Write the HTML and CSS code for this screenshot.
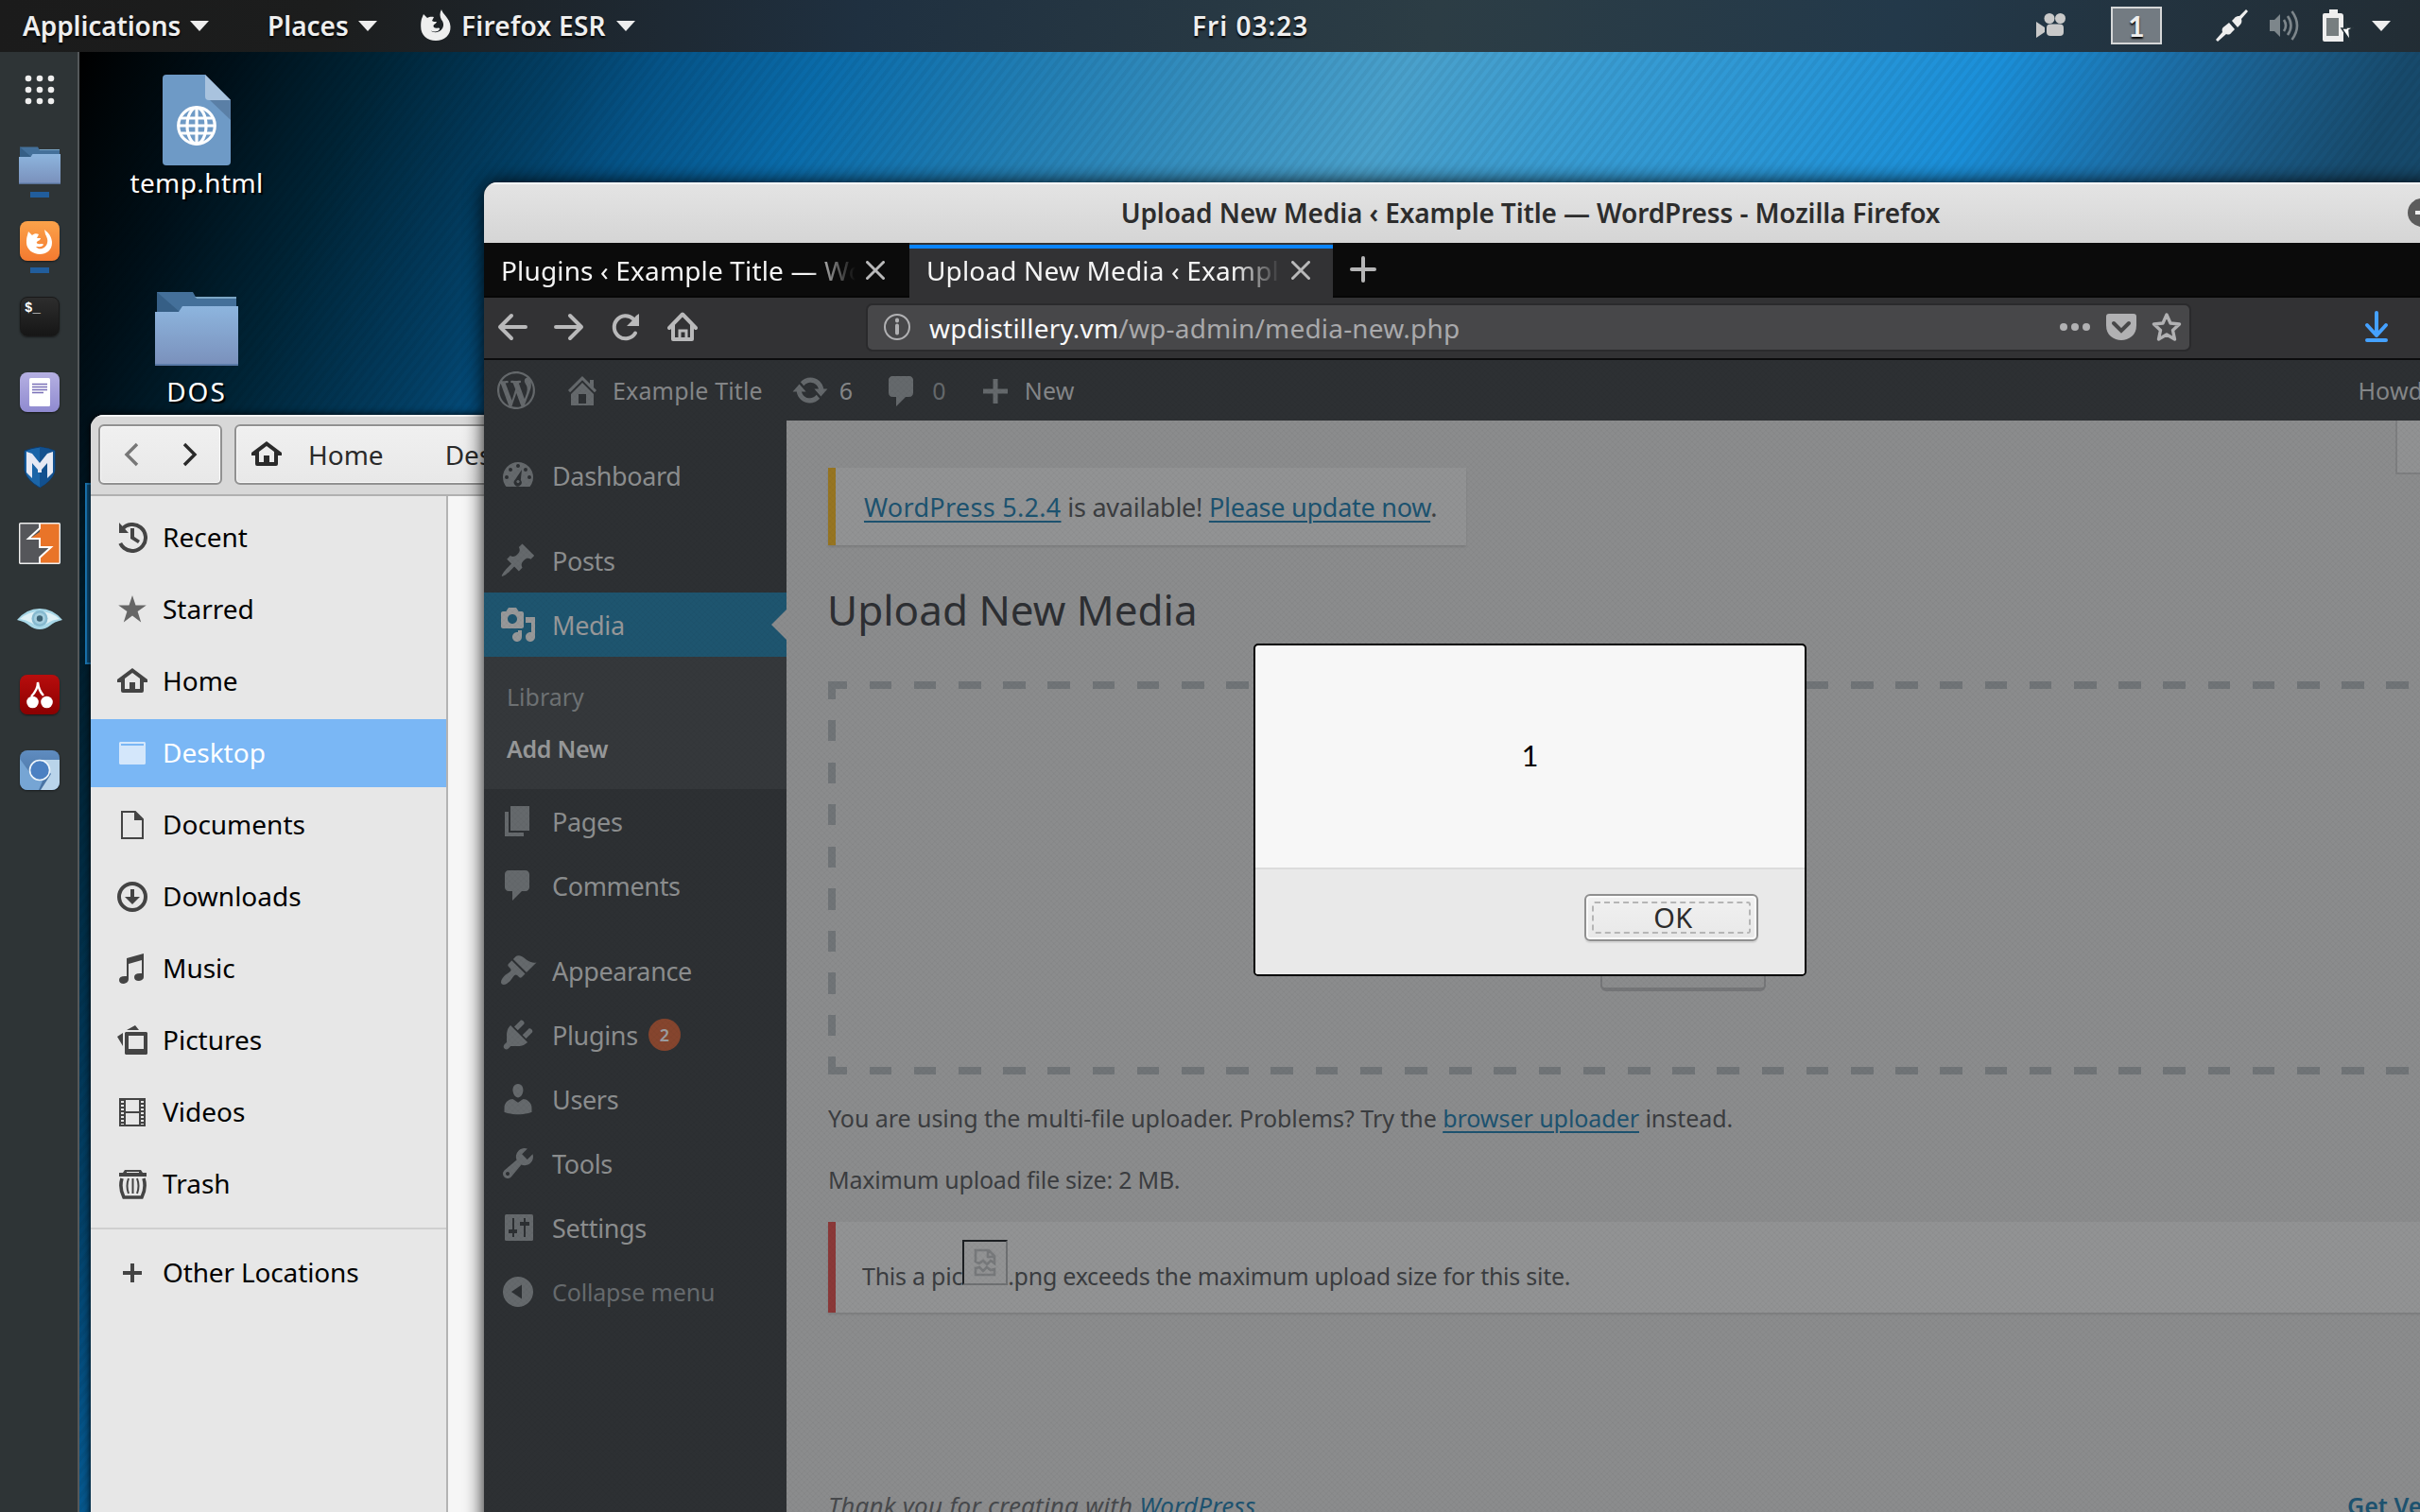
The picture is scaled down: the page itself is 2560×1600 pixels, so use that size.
FILE: index.html
```html
<!DOCTYPE html>
<html lang="en">
<head>
<meta charset="utf-8">
<title>Desktop</title>
<link rel="stylesheet" href="styles.css">
</head>
<body>
<div class="desktop">

  <header class="topbar">
    <nav class="topmenu">
      <span class="topitem apps">Applications <i class="caret"></i></span>
      <span class="topitem places">Places <i class="caret"></i></span>
      <span class="topitem current">
        <svg width="32" height="42" viewBox="0 0 32 42"><path fill="#eee" d="M1 14 3 9l4 4c2-1.500 5-1.500 7-1l-2 4c1 1 3 1 5 1-.500 2-3 2.500-3.500 4-.500 2 2 3.500 5 2.500 1 0 2 .500 1.500 1.500-2 3-6 3-9 1.500C13 29 20 29 23 24c2-3 1-7-1-9-2-4-2-7 0-11 1 5 9 9 9.500 18C32 31 25 37 16 37S0 31 .200 22C.200 18 .300 17 1 14z"/></svg>
        Firefox ESR <i class="caret"></i></span>
    </nav>
    <span class="clock">Fri 03:23</span>
    <div class="tray">
      <svg class="t-cam" width="32" height="26" viewBox="0 0 32 26"><g fill="#c9c9c9"><circle cx="14" cy="5.500" r="5.500"/><circle cx="25.500" cy="5.500" r="5.500"/><rect x="11" y="11.500" width="18" height="12.500" rx="4"/><path d="M0 9l9 6v5l-9 6z"/></g></svg>
      <span class="workspace">1</span>
      <svg class="t-plug" width="34" height="34" viewBox="0 0 34 34"><path fill="#eee" d="M32 0l2 2-7 8c1 3 0 5-2 7l-2 2-6-7 2-2c2-3 4-3 6-3zM14 14l6 7-3 3c-2 3-4 3-6 2l-9 8-2-2 7-8c-1-3 0-5 2-6z"/></svg>
      <svg class="t-vol" width="34" height="34" viewBox="0 0 34 34"><path fill="#7d868b" d="M1 11h5l6-6v24l-6-6H1z"/><g fill="none" stroke="#7d868b" stroke-width="2.600"><path d="M16 11q4 6 0 12M20 7q7 10 0 20M24.500 2q11 15 0 30"/></g></svg>
      <svg class="t-bat" width="34" height="34" viewBox="0 0 34 34"><path fill="#eee" d="M8 0h9v4h3q3 0 3 3v27H3q-2 0-2-2V6q0-2 2-2h5z"/><path fill="#777e80" d="M5 9h13v19H5z"/><path fill="#fff" stroke="#26333a" stroke-width="1.500" d="M24 8l3 11h7l-5 3 1 11-9-13h5z"/></svg>
      <i class="caret"></i>
    </div>
  </header>

  <aside class="dock">
    <div class="slot"><svg width="32" height="32" viewBox="0 0 32 32" fill="#eee"><circle cx="4" cy="4" r="3.300"/><circle cx="16" cy="4" r="3.300"/><circle cx="28" cy="4" r="3.300"/><circle cx="4" cy="16" r="3.300"/><circle cx="16" cy="16" r="3.300"/><circle cx="28" cy="16" r="3.300"/><circle cx="4" cy="28" r="3.300"/><circle cx="16" cy="28" r="3.300"/><circle cx="28" cy="28" r="3.300"/></svg></div>
    <div class="slot running"><svg width="44" height="40" viewBox="0 0 88 80" preserveAspectRatio="none"><use href="#folder"/></svg></div>
    <div class="slot running"><span class="app app-ff"><svg width="42" height="42" viewBox="0 0 42 42"><path fill="#fff" d="M8 15l1-4 4 4c2-2 5-2 7-1l-2 4h4c0 2-3 3-4 4s1 3 4 2c2 0 3 0 3 1-2 3-5 2-8 2 4 5 11 1 12-4 1-4-1-7-2-9l-1-5c5 4 8 8 8 14 0 8-6 12-13 12S7 30 7 23c0-3 0-5 1-8z"/></svg></span></div>
    <div class="slot"><span class="app app-term"><b>$_</b></span></div>
    <div class="slot"><span class="app app-doc"><svg width="22" height="30" viewBox="0 0 22 30"><rect width="22" height="30" rx="1.500" fill="#fff"/><path d="M3 6.500h16M3 9.500h16M3 12.500h16M3 15.500h12" stroke="#7a70b8" stroke-width="1.300"/></svg></span></div>
    <div class="slot"><svg width="36" height="46" viewBox="0 0 36 46"><path d="M18 1Q26 2 34 5v21q-2 10-16 18Q4 36 2 26V5Q10 2 18 1z" fill="#1b65a8" stroke="#0b3c70"/><path d="M18 1Q26 2 34 5v21q-2 10-16 18z" fill="#12508f"/><path d="M4 6l6 2 8 10 8-10 6-2v22l-6 6V18l-6 7v3h-4v-3l-6-7v16l-6-6z" fill="#e6e9f4"/></svg></div>
    <div class="slot"><svg width="44" height="44" viewBox="0 0 44 44"><rect x="1" y="1" width="42" height="42" fill="#55565a"/><path d="M22 1v9L10 18h12v8h12L22 36v7h21V1z" fill="#e97428"/><path d="M22 1v5L10 17h12v9h12L22 37v6" fill="none" stroke="#fff" stroke-width="2"/><rect x=".700" y=".700" width="42.600" height="42.600" rx="1" fill="none" stroke="#eee" stroke-width="1.400"/></svg></div>
    <div class="slot"><svg width="48" height="26" viewBox="0 0 48 26"><path d="M0 14Q10 2 24 2t24 12q-9 2-13 6-5 4-11 4t-11-4Q9 16 0 14z" fill="#a8d8e8"/><path d="M3 13Q12 5 24 5t21 8q-8 1-12 4-4 3-9 3t-9-3q-5-3-12-4z" fill="#e0f1f6"/><circle cx="24" cy="12.500" r="8.500" fill="#86b9cf"/><circle cx="24" cy="12.500" r="6" fill="#a5cfdf"/><circle cx="24" cy="12.500" r="3.200" fill="#3d6273"/></svg></div>
    <div class="slot"><span class="app app-cherry"><svg width="42" height="42" viewBox="0 0 42 42"><g fill="#fff"><circle cx="13.500" cy="29" r="6.300"/><circle cx="28.500" cy="29" r="6.300"/></g><path d="M12 23q7-7 7-15 1 9 6 14" fill="none" stroke="#fff" stroke-width="2.400"/></svg></span></div>
    <div class="slot"><span class="app app-chromium"><svg width="42" height="42" viewBox="0 0 42 42"><path d="M0 9l13 18 12 3-5 12H6q-6 0-6-6z" fill="#76a5d4"/><path d="M21 10h21v26q0 6-6 6H22l11-17z" fill="#b9d4ea"/><circle cx="21" cy="21" r="10.500" fill="#4b80c2" stroke="#eef5fb" stroke-width="1.600"/></svg></span></div>
  </aside>

  <div class="shortcut sc-temp">
    <svg width="72" height="96" viewBox="0 0 72 96"><path d="M4 0h41l27 27v65q0 4-4 4H4q-4 0-4-4V4q0-4 4-4z" fill="#6e9ac6"/><path d="M50 27h22v21z" fill="#5a7fa6"/><path d="M45 0l27 27H49q-4 0-4-4z" fill="#a9c3de"/><g fill="none" stroke="#fff" stroke-width="3.200"><circle cx="36" cy="54" r="19.300"/><ellipse cx="36" cy="54" rx="10" ry="19"/><path d="M36 35v38M17 54h38M19.500 46h33M19.500 62h33"/></g></svg>
    <span>temp.html</span>
  </div>
  <div class="shortcut sc-dos">
    <svg width="88" height="80" viewBox="0 0 88 80"><defs><linearGradient id="fg" x1="0" y1="0" x2="0" y2="1"><stop offset="0" stop-color="#8db5de"/><stop offset="1" stop-color="#7a90bb"/></linearGradient></defs><g id="folder"><path d="M2 1h38l4 7h42v30H2z" fill="#44709a"/><path d="M2 1l24 21H2z" fill="#365f86"/><path d="M42 6h44v2H44z" fill="#7ba6c6"/><path d="M0 22h25l4-6h59v63H0z" fill="url(#fg)"/><path d="M0 77h88v2H0z" fill="#5a7aa8"/></g></svg>
    <span>DOS</span>
  </div>
  <div class="selection"></div>

  <section class="window files">
    <div class="files-head">
      <div class="pair">
        <svg width="64" height="60" viewBox="0 0 64 60"><path d="M39 19L28 30l11 11" fill="none" stroke="#777" stroke-width="3.400"/></svg>
        <svg width="64" height="60" viewBox="0 0 64 60"><path d="M25 19l11 11-11 11" fill="none" stroke="#2a2a2a" stroke-width="3.400"/></svg>
      </div>
      <div class="path">
        <svg width="32" height="32" viewBox="0 0 32 32"><use href="#house"/></svg>
        <span>Home</span><span class="crumb2">Desktop</span>
      </div>
    </div>
    <div class="files-body">
      <ul class="places-list">
        <li><svg width="32" height="32" viewBox="0 0 32 32"><circle cx="16" cy="16" r="14" fill="none" stroke="#444" stroke-width="4" stroke-dasharray="72 16" transform="rotate(-141 16 16)"/><path fill="#444" d="M2 0v11h10zM14 6h4v9l6 4-2 3-8-5z"/></svg>Recent</li>
        <li><svg width="32" height="32" viewBox="0 0 32 32"><path fill="#666" d="M16 1l3.500 10.500h11.300l-9.200 6.600 3.600 11.300L16 22.500 6.800 29.400l3.600-11.300-9.200-6.600h11.300z"/></svg>Starred</li>
        <li><svg width="32" height="32" viewBox="0 0 32 32"><path id="house" fill="currentColor" fill-rule="evenodd" d="M16 2L0 14v3h4v9q0 2 2 2h20q2 0 2-2v-9h4v-3zM16 7l8 6v11h-5v-7h-6v7H8V13z"/></svg>Home</li>
        <li class="on"><svg width="32" height="32" viewBox="0 0 32 32"><path fill="#d4e7fb" fill-rule="evenodd" d="M3 4h26l1 1v22l-1 1H3l-1-1V5zm1 2v2h24V6z"/></svg>Desktop</li>
        <li><svg width="32" height="32" viewBox="0 0 32 32"><path d="M5 2h14l8 8v20H5z" fill="none" stroke="#444" stroke-width="2"/><path d="M18 1v10h10z" fill="#444"/></svg>Documents</li>
        <li><svg width="32" height="32" viewBox="0 0 32 32"><circle cx="16" cy="16" r="14" fill="none" stroke="#444" stroke-width="4"/><path fill="#444" d="M14 8h4v8h6l-8 8-8-8h6z"/></svg>Downloads</li>
        <li><svg width="32" height="32" viewBox="0 0 32 32"><path fill="#444" d="M10 5l18-5v25q0 3-5 4-5 0-5-4t6-4h2V7l-14 4v16q0 4-5 5-5 0-5-4t6-4h2z"/></svg>Music</li>
        <li><svg width="32" height="32" viewBox="0 0 32 32"><path fill="#444" fill-rule="evenodd" d="M9 7h22l1 1v22l-1 1H9l-1-1V8zm3 4v14h16V11zM10 5l9-5 4 5zM0 12l6-4v14z"/></svg>Pictures</li>
        <li><svg width="32" height="32" viewBox="0 0 32 32"><path fill="none" stroke="#444" stroke-width="2" d="M3 2h26v28H3zM8 2v28M24 2v28M8 16h16"/><path stroke="#444" stroke-width="4" stroke-dasharray="2 2" d="M5.500 2v28M26.500 2v28"/></svg>Videos</li>
        <li><svg width="32" height="32" viewBox="0 0 32 32"><path fill="#444" fill-rule="evenodd" d="M6 4l2-3h17l2 3h4v4H2V4zm4 0h13V3H10z"/><path fill="none" stroke="#444" stroke-width="3.600" d="M5 10q-3 10 2 20h19q5-10 2-20"/><path fill="none" stroke="#444" stroke-width="2" d="M12 10q-3 8 0 16M16.500 10v16M21 10q3 8 0 16"/></svg>Trash</li>
        <li class="other"><svg width="32" height="32" viewBox="0 0 32 32"><path fill="#444" d="M14 6h4v8h8v4h-8v8h-4v-8H6v-4h8z"/></svg>Other Locations</li>
      </ul>
      <div class="files-pane"></div>
    </div>
  </section>

  <section class="window firefox">
    <div class="titlebar"><span>Upload New Media ‹ Example Title — WordPress - Mozilla Firefox</span><i class="minimize"></i></div>
    <div class="tabs">
      <div class="tab"><span>Plugins ‹ Example Title — Wo</span><svg width="20" height="20" viewBox="0 0 20 20"><path d="M1.500 1.500l17 17M18.500 1.500l-17 17" stroke="#b9b9ba" stroke-width="3" stroke-linecap="round"/></svg></div>
      <div class="tab active"><span>Upload New Media ‹ Example</span><svg width="20" height="20" viewBox="0 0 20 20"><path d="M1.500 1.500l17 17M18.500 1.500l-17 17" stroke="#b9b9ba" stroke-width="3" stroke-linecap="round"/></svg></div>
      <svg class="newtab" width="28" height="28" viewBox="0 0 28 28"><path d="M14 2v24M2 14h24" stroke="#b5b5b6" stroke-width="4" stroke-linecap="round"/></svg>
    </div>
    <div class="navbar">
      <svg width="32" height="32" viewBox="0 0 32 32"><path d="M15 4L3 16l12 12M3 16h27" class="line"/></svg>
      <svg width="32" height="32" viewBox="0 0 32 32"><path d="M17 4l12 12-12 12M29 16H2" class="line"/></svg>
      <svg width="32" height="32" viewBox="0 0 32 32"><path d="M26 22.500A12 12 0 1 1 24 7.500" class="line"/><path d="M30 2v13H17l5-5 5-6z" fill="#b9b9ba"/></svg>
      <svg width="32" height="32" viewBox="0 0 32 32"><path d="M2 17L16 2.500 30 17" class="line"/><path d="M6 14v15h20V14" class="line"/><path d="M13 29v-9h7v9z" fill="none" stroke="#b9b9ba" stroke-width="3"/></svg>
      <div class="urlbar">
        <svg width="30" height="30" viewBox="0 0 30 30"><circle cx="15" cy="15" r="13" fill="none" stroke="#b1b1b3" stroke-width="2"/><path d="M15 13.500v8M15 7.500v1" stroke="#b1b1b3" stroke-width="4" stroke-linecap="round"/></svg>
        <span class="url">wpdistillery.vm<em>/wp-admin/media-new.php</em></span>
        <svg width="34" height="10" viewBox="0 0 34 10" fill="#b1b1b3"><circle cx="5" cy="5" r="4"/><circle cx="17" cy="5" r="4"/><circle cx="29" cy="5" r="4"/></svg>
        <svg width="32" height="28" viewBox="0 0 32 28"><path fill="#b1b1b3" d="M3 0h26q3 0 3 3v9q0 8-5 12-5 4-11 4T5 24Q0 20 0 12V3q0-3 3-3z"/><path d="M8 10l8 8 8-8" fill="none" stroke="#474749" stroke-width="4" stroke-linecap="round"/></svg>
        <svg width="32" height="32" viewBox="0 0 32 32"><path d="M16 3l4 9 9.500 1-7 6.500 2 9.500-8.500-5-8.500 5 2-9.500-7-6.500L12 12z" fill="none" stroke="#b1b1b3" stroke-width="3.400" stroke-linejoin="round"/></svg>
      </div>
      <svg class="dl" width="26" height="34" viewBox="0 0 26 34"><path d="M13 2v24M3 15l10 11 10-11M3 31h20" fill="none" stroke="#45a1ff" stroke-width="4" stroke-linecap="round" stroke-linejoin="round"/></svg>
    </div>

    <div class="page">
      <div class="adminbar">
        <svg class="wp" width="40" height="40" viewBox="0 0 20 20"><path d="M20 10c0-5.510-4.490-10-10-10C4.480 0 0 4.490 0 10c0 5.520 4.480 10 10 10 5.510 0 10-4.480 10-10zM7.780 15.370L4.370 6.220c.55-.02 1.170-.08 1.170-.08.5-.06.44-1.130-.06-1.110 0 0-1.450.11-2.370.11-.18 0-.37 0-.58-.01C4.120 2.690 6.870 1.110 10 1.110c2.330 0 4.450.87 6.050 2.340-.68-.11-1.650.39-1.650 1.580 0 .74.45 1.360.9 2.100.35.61.55 1.360.55 2.460 0 1.490-1.400 5-1.400 5l-3.030-8.370c.54-.02.82-.17.82-.17.5-.05.44-1.250-.06-1.220 0 0-1.440.12-2.380.12-.87 0-2.330-.12-2.330-.12-.5-.03-.56 1.200-.06 1.220l.92.08 1.260 3.410zM17.410 10c.24-.64.74-1.870.43-4.250.7 1.290 1.050 2.710 1.050 4.250 0 3.290-1.730 6.240-4.400 7.780.97-2.590 1.940-5.200 2.920-7.780zM6.100 18.090C3.120 16.650 1.110 13.530 1.110 10c0-1.300.23-2.480.72-3.590C3.250 10.300 4.670 14.200 6.100 18.090zm4.030-6.630l2.580 6.980c-.86.29-1.760.45-2.710.45-.79 0-1.570-.11-2.290-.33.81-2.380 1.620-4.740 2.420-7.100z"/></svg>
        <svg class="site" width="40" height="40" viewBox="0 0 20 20"><path fill-rule="evenodd" d="M16 8.500l1.530 1.530-1.060 1.060L10 4.600l-6.470 6.490-1.060-1.060L10 2.500l4 4v-2h2v4zm-6-2.460l6 5.990V18H4v-5.970zM12 17v-5H8v5h4z"/></svg>
        <span class="ab-site">Example Title</span>
        <svg class="upd" width="40" height="40" viewBox="0 0 20 20"><path d="M10.200 3.280c3.530 0 6.430 2.610 6.920 6h2.080l-3.500 4-3.500-4h2.320c-.45-1.970-2.210-3.450-4.320-3.450-1.450 0-2.730.71-3.540 1.780L4.950 5.660C6.230 4.200 8.110 3.280 10.200 3.280zm-.4 13.440c-3.520 0-6.430-2.610-6.920-6H.8l3.500-4c1.170 1.330 2.330 2.670 3.500 4H5.480c.45 1.970 2.210 3.450 4.320 3.450 1.450 0 2.730-.71 3.540-1.780l1.710 1.950c-1.280 1.460-3.150 2.380-5.250 2.380z"/></svg>
        <span class="ab-upd">6</span>
        <svg class="com" width="40" height="40" viewBox="0 0 20 20"><path d="M5 2h9c1.100 0 2 .9 2 2v7c0 1.100-.9 2-2 2h-2l-5 5v-5H5c-1.100 0-2-.9-2-2V4c0-1.100.9-2 2-2z"/></svg>
        <span class="ab-com">0</span>
        <svg class="plus" width="26" height="26" viewBox="0 0 26 26"><path d="M10.500 0h5v10.500H26v5H15.500V26h-5V15.500H0v-5h10.500z"/></svg>
        <span class="ab-new">New</span>
        <span class="howdy">Howdy, admin</span>
      </div>
      <div class="wp-body">
        <ul class="wp-menu">
          <li class="gap"></li>
          <li class="dash"><svg width="40" height="40" viewBox="0 0 20 20"><path d="M3.760 17h12.480A8 8 0 0 0 18 12a8 8 0 0 0-16 0c0 1.890.66 3.630 1.760 5z"/><g class="hole"><circle cx="10" cy="6" r="1"/><circle cx="6" cy="8" r="1"/><circle cx="14" cy="8" r="1"/><circle cx="4" cy="12" r="1"/><circle cx="16" cy="12" r="1"/><path d="M12 8l-.600 5.500a2 2 0 1 1-2.900-.200z"/></g><circle cx="10" cy="14.300" r=".800"/></svg>Dashboard</li>
          <li class="gap"></li>
          <li><svg width="40" height="40" viewBox="0 0 20 20"><path d="M10.440 3.020l1.820-1.820 6.360 6.350-1.830 1.820c-1.050-.68-2.480-.57-3.410.36l-.75.75c-.92.93-1.040 2.350-.35 3.410l-1.830 1.820-2.410-2.410-2.800 2.790c-.42.42-3.380 2.710-3.800 2.290s1.860-3.390 2.280-3.810l2.790-2.790L4.100 9.360l1.830-1.820c1.050.69 2.480.57 3.400-.36l.75-.75c.93-.92 1.050-2.350.36-3.410z"/></svg>Posts</li>
          <li class="active"><svg width="40" height="40" viewBox="0 0 20 20"><path d="M13 11V4c0-.55-.45-1-1-1h-1.670L9 1H5L3.670 3H2c-.55 0-1 .45-1 1v7c0 .55.45 1 1 1h10c.55 0 1-.45 1-1zM7 4.500c1.380 0 2.500 1.120 2.500 2.500S8.380 9.500 7 9.500 4.500 8.380 4.500 7 5.620 4.500 7 4.500zM14 6h5v10.500c0 1.380-1.120 2.500-2.500 2.500S14 17.880 14 16.500s1.120-2.500 2.500-2.500c.17 0 .34.02.5.05V9h-3V6zm-4 8.050V13h2v3.500c0 1.380-1.120 2.500-2.500 2.500S7 17.880 7 16.500 8.120 14 9.500 14c.17 0 .34.02.5.05z" fill-rule="evenodd"/></svg>Media</li>
          <li class="sub"><span>Library</span><b>Add New</b></li>
          <li><svg width="40" height="40" viewBox="0 0 20 20"><path d="M6 15V2h10v13H6zm-1 1h8v2H3V5h2v11z"/></svg>Pages</li>
          <li><svg width="40" height="40" viewBox="0 0 20 20"><path d="M5 2h9c1.100 0 2 .9 2 2v7c0 1.100-.9 2-2 2h-2l-5 5v-5H5c-1.100 0-2-.9-2-2V4c0-1.100.9-2 2-2z"/></svg>Comments</li>
          <li class="gap"></li>
          <li><svg width="40" height="40" viewBox="0 0 20 20"><path d="M14.480 11.060L7.410 3.990l1.500-1.500c.5-.56 2.300-.47 3.510.32 1.210.8 1.430 1.280 2.910 2.100 1.180.64 2.450 1.260 4.450.85zm-.71.71L6.700 4.700 4.930 6.470c-.39.39-.39 1.020 0 1.410l1.060 1.060c.39.39.39 1.030 0 1.420-.6.6-1.430 1.110-2.210 1.690-.35.26-.7.53-1.010.84C1.430 14.230.4 16.080 1.400 17.070c.99 1 2.840-.03 4.180-1.360.31-.31.58-.66.85-1.020.57-.78 1.080-1.610 1.690-2.210.39-.39 1.020-.39 1.410 0l1.060 1.060c.39.39 1.020.39 1.410 0z"/></svg>Appearance</li>
          <li><svg width="40" height="40" viewBox="0 0 20 20"><path d="M13.110 4.360L9.870 7.600 8 5.730l3.240-3.240c.35-.34 1.050-.2 1.560.32.52.51.66 1.210.31 1.550zm-8 1.770l.91-1.120 9.010 9.010-1.190.84c-.71.71-2.630 1.160-3.820 1.160H6.140L4.900 17.260c-.59.59-1.540.59-2.120 0-.59-.58-.59-1.530 0-2.120l1.240-1.240v-3.880c0-1.130.4-3.190 1.090-3.890zm7.260 3.970l3.240-3.240c.34-.35 1.040-.21 1.550.31.52.51.66 1.210.31 1.550l-3.240 3.250z"/></svg>Plugins <span class="count">2</span></li>
          <li><svg width="40" height="40" viewBox="0 0 20 20"><path d="M10 9.250c-2.270 0-2.730-3.440-2.730-3.440C7 4.020 7.820 2 9.970 2c2.160 0 2.980 2.020 2.710 3.810 0 0-.41 3.440-2.680 3.440zm0 2.570L12.720 10c2.390 0 4.520 2.330 4.520 4.530v2.490s-3.650 1.130-7.240 1.130c-3.650 0-7.240-1.130-7.240-1.130v-2.490c0-2.250 1.940-4.480 4.470-4.480z"/></svg>Users</li>
          <li><svg width="40" height="40" viewBox="0 0 20 20"><path fill-rule="evenodd" d="M16.680 9.770c-1.340 1.340-3.300 1.670-4.950.99l-5.410 6.520c-.99.99-2.590.99-3.580 0s-.99-2.590 0-3.570l6.520-5.420c-.68-1.650-.35-3.610.99-4.950 1.280-1.280 3.120-1.620 4.720-1.060l-2.890 2.890 2.820 2.820 2.860-2.870c.53 1.580.18 3.390-1.080 4.650zM3.810 16.210c.4.39 1.040.39 1.430 0 .4-.4.4-1.040 0-1.430-.39-.4-1.030-.4-1.430 0-.39.39-.39 1.030 0 1.430z"/></svg>Tools</li>
          <li><svg width="40" height="40" viewBox="0 0 20 20"><rect x="3" y="3" width="15" height="14" rx=".800"/><g class="hole"><path d="M7 5h1v6h1.500v2H8v2H7v-2H5v-2h2zM13 5h1v2h2v2h-2v6h-1V9h-2V7h2z"/></g></svg>Settings</li>
          <li class="collapse"><svg width="40" height="40" viewBox="0 0 20 20"><circle cx="10" cy="10" r="8"/><path class="hole" d="M12 6.200v7.600L6.500 10z"/></svg>Collapse menu</li>
        </ul>
        <main class="wp-content">
          <div class="screen-options"></div>
          <div class="notice warn"><a class="ver">WordPress 5.2.4</a> is available! <a>Please update now</a>.</div>
          <h1>Upload New Media</h1>
          <div class="dropzone"><div class="select-btn"></div></div>
          <p class="p1">You are using the multi-file uploader. Problems? Try the <a>browser uploader</a> instead.</p>
          <p class="p2">Maximum upload file size: 2 MB.</p>
          <div class="notice error">This a pic<span class="broken"><svg width="24" height="30" viewBox="0 0 24 30" fill="none" stroke="#77797b" stroke-width="2.600"><path d="M2 14V2h14l6 6v8l-4-3-4 4-4-4-4 3zM15 2v7h7M2 28v-7l4-1 4 4 4-4 4 3 4-1v6z"/></svg></span>.png exceeds the maximum upload size for this site.</div>
          <footer><span>Thank you for creating with <a>WordPress</a></span><b>Get Version 5.2.4</b></footer>
        </main>
      </div>
      <div class="dialog">
        <div class="message">1</div>
        <div class="actions"><button><span>OK</span></button></div>
      </div>
    </div>
  </section>
</div>
</body>
</html>
```
FILE: styles.css
```css
* { box-sizing: border-box; }
html, body { margin: 0; height: 100%; overflow: hidden; }
body { font-family: "Noto Sans", "Open Sans", sans-serif; font-size: 28px; }
ul { list-style: none; margin: 0; padding: 0; }
svg { display: block; flex: none; }

.desktop {
  position: relative; width: 2560px; height: 1600px; overflow: hidden;
  background:
    repeating-linear-gradient(128deg, rgba(0,0,0,.05) 0 3px, rgba(0,0,0,0) 4px 7px, rgba(0,0,0,.05) 8px),
    linear-gradient(113deg, #000 100px, #001019 250px, #002436 390px, #034168 580px, #055387 667px, #0a6cab 830px, #2480b5 1060px, #3a93c2 1250px, #4aa1cc 1400px, #3b9dd2 1560px, #2b97d6 1780px, #1b90da 1970px, #1c6fa8 2140px, #1b5d8a 2250px, #174a6c 2370px);
}

/* top panel */
.topbar {
  position: relative; display: flex; align-items: center; height: 55px; padding: 0 31px 1px 0;
  font-weight: 600; color: #eee; text-shadow: 0 2px 2px #000; letter-spacing: -.1px;
  background: linear-gradient(100deg, #1b1b1b 0, #1c1d1d 340px, #1f3040 900px, #2c3d45 1500px, #23394a 1980px, #222c33 2560px);
}
.topmenu { display: flex; width: 1261px; padding-left: 24px; }
.topitem { display: flex; align-items: center; gap: 10px; white-space: nowrap; }
.apps { width: 259px; }
.places { width: 162px; letter-spacing: 0; }
.current { letter-spacing: .25px; gap: 11px; }
.caret { flex: none; width: 0; height: 0; border: 10px solid transparent; border-top: 11px solid #eee; border-bottom: 0; }
.clock { letter-spacing: 1px; white-space: nowrap; }
.tray { display: flex; align-items: center; margin-left: auto; }
.workspace {
  width: 54px; height: 40px; margin: 0 57px 0 47px; border: 2px solid #d5d7d8; background: #737b82;
  text-align: center; font: 700 30px/36px Lato, sans-serif;
}
.t-vol { margin: 0 22px; }
.t-bat { margin-right: 19px; }

/* dock */
.dock { position: absolute; left: 0; top: 55px; width: 84px; height: 1545px; background: #2e3436; border-right: 2px solid #54585a; }
.slot { position: relative; height: 80px; padding-left: 2px; display: flex; align-items: center; justify-content: center; }
.running::after { content: ""; position: absolute; left: 32px; bottom: 6px; width: 20px; height: 6px; background: #215d9c; }
.app { width: 42px; height: 42px; border-radius: 8px; overflow: hidden; display: flex; align-items: center; justify-content: center; box-shadow: 0 1px 2px rgba(0,0,0,.5); }
.app-ff { background: linear-gradient(#fba24a, #f47a30); }
.app-term { background: linear-gradient(#2d2d2d, #161616); align-items: flex-start; justify-content: flex-start; border: 1px solid #191919; }
.app-term b { font: 700 14px/18px "Liberation Mono", monospace; color: #fff; padding: 2px 0 0 4px; }
.app-doc { background: linear-gradient(#b5b0e2, #8f8ad0); }
.app-cherry { background: linear-gradient(#b80d0d, #8b0000); }
.app-chromium { background: linear-gradient(#5f8cc0, #46709f); }

/* desktop icons */
.shortcut { position: absolute; width: 160px; display: flex; flex-direction: column; align-items: center; color: #fff; text-shadow: 2px 2px 1px #000; letter-spacing: .4px; line-height: 40px; }
.sc-temp { left: 128px; top: 79px; }
.sc-dos { left: 128px; top: 308px; }
.sc-temp span { margin-top: -2px; }
.sc-dos { gap: 6px; }
.sc-dos span { letter-spacing: 2px; }
.selection { position: absolute; left: 90px; top: 511px; width: 40px; height: 192px; border: 2px solid #1b7fc0; background: #0f4d78; }

.window { position: absolute; border-radius: 14px 14px 0 0; overflow: hidden; }

/* file manager */
.files { left: 96px; top: 439px; width: 600px; height: 1200px; background: #f6f6f6; box-shadow: 0 0 8px #000; }
.files-head { display: flex; gap: 13px; height: 86px; padding: 10px 0 0 8px; background: #d8d8d8; border-bottom: 2px solid #b0b0b0; box-shadow: inset 0 2px #f4f4f4; }
.pair, .path { height: 64px; border: 2px solid #919191; border-radius: 6px; background: linear-gradient(#f0f0f0, #e8e8e8); display: flex; align-items: center; box-shadow: inset 0 0 0 1px #fafafa; }
.pair { width: 131px; }
.path { width: 600px; padding: 0 0 1px 16px; color: #2a2a2a; }
.path span { margin-left: 28px; }
.path .crumb2 { margin-left: 65px; }
.files-body { display: flex; height: 1114px; }
.places-list { width: 378px; padding-top: 8px; background: #e7e7e7; border-right: 2px solid #b3b3b3; display: flex; flex-direction: column; gap: 4px; color: #000; }
.places-list li { height: 72px; flex: none; display: flex; align-items: center; gap: 16px; padding: 0 0 2px 28px; white-space: nowrap; }
.places-list svg { color: #444; position: relative; top: 1px; }
.places-list .on { background: #7ab7f5; color: #fff; }
.places-list .other { margin-top: 6px; height: 84px; padding-top: 9px; border-top: 2px solid #cfcfcf; letter-spacing: -.15px; }
.files-pane { flex: 1; background: #f6f6f6; }

/* browser */
.firefox { left: 512px; top: 193px; width: 2214px; height: 1500px; background: #0c0c0d; box-shadow: 0 0 20px rgba(0,0,0,.95); }
.titlebar { position: relative; height: 64px; padding-bottom: 1px; background: linear-gradient(#e4e4e4, #d5d5d5); box-shadow: inset 0 2px #fbfbfb; display: flex; align-items: center; justify-content: center; font-weight: 600; letter-spacing: -.12px; color: #2d2d2d; white-space: nowrap; }
.minimize { position: absolute; left: 2035px; top: 17px; width: 30px; height: 30px; border-radius: 50%; background: #5c5c5c; }
.minimize::after { content: ""; position: absolute; left: 8px; top: 13px; width: 14px; height: 4px; background: #eee; }
.tabs { height: 58px; display: flex; align-items: center; background: #0b0b0b; border-bottom: 2px solid #060606; }
.tab { display: flex; align-items: center; width: 450px; height: 58px; padding: 0 24px 0 18px; margin-bottom: -2px; color: #f5f5f5; gap: 9px; }
.tab span { width: 377px; overflow: hidden; white-space: nowrap; letter-spacing: .15px; -webkit-mask-image: linear-gradient(90deg, #000 325px, transparent 375px); mask-image: linear-gradient(90deg, #000 325px, transparent 375px); }
.tab.active { position: relative; width: 448px; background: #323234; }
.tab.active::before { content: ""; position: absolute; left: 0; top: 2px; width: 100%; height: 4px; background: #0a84ff; }
.newtab { margin-left: 18px; }
.navbar { height: 66px; display: flex; align-items: center; gap: 28px; padding: 0 0 2px 14px; background: #323234; border-bottom: 2px solid #0c0c0d; }
.line { fill: none; stroke: #b9b9ba; stroke-width: 4; stroke-linecap: round; stroke-linejoin: round; }
.urlbar { width: 1402px; height: 51px; margin-left: 150px; padding: 0 8px 0 16px; display: flex; align-items: center; gap: 16px; background: #474749; border: 2px solid #2a2a2c; border-radius: 7px; }
.url { flex: 1; margin-left: 3px; padding-top: 1px; color: #f9f9fa; letter-spacing: .2px; }
.url em { font-style: normal; color: #a9a9ab; }
.dl { margin-left: 155px; }

/* dimmed page under the alert */
.page { position: relative; height: 1300px; }
.page a { color: #1d5370; text-decoration: underline; text-decoration-thickness: 2px; text-underline-offset: 4px; }
.page svg { fill: #65696c; }
.adminbar { height: 64px; display: flex; align-items: center; padding-left: 14px; background: #2d3033; color: #858789; font-size: 25px; white-space: nowrap; letter-spacing: .15px; }
.adminbar .site { margin: 0 12px 0 30px; }
.adminbar .upd { margin: 0 11px 0 30px; }
.adminbar .com { margin: 2px 12px 0 32px; }
.adminbar .plus { margin: 2px 18px 0 39px; }
.ab-com { color: #65696c; }
.howdy { margin-left: 1358px; }
.wp-body { display: flex; height: 1236px; }
.wp-menu { width: 320px; background: #2d3033; color: #8c8e8f; font-size: 27px; letter-spacing: -.35px; }
.wp-menu li { height: 68px; padding: 0 0 0 16px; display: flex; align-items: center; white-space: nowrap; }
.wp-menu li svg { margin: 0 16px 0 0; }
.wp-menu .dash svg { margin-top: -4px; }
.wp-menu .gap { height: 22px; }
.wp-menu .gap:first-child { height: 24px; }
.wp-menu .hole { fill: #2d3033; }
.wp-menu .active { position: relative; background: #1e556f; color: #979899; }
.wp-menu .active svg { fill: #979899; }
.wp-menu .active::after { content: ""; position: absolute; right: 0; top: 18px; border: 16px solid transparent; border-right-color: #8b8c8d; border-left: 0; }
.wp-menu .sub { height: 140px; padding: 15px 0 15px 24px; flex-direction: column; align-items: flex-start; background: #35383b; font-size: 25px; line-height: 55px; letter-spacing: 0; color: #6e7274; }
.sub b { font-weight: 600; color: #979899; letter-spacing: -.3px; }
.count { width: 34px; height: 34px; margin: 0 0 0 11px; border-radius: 50%; background: #86452e; color: #9c9da0; font-size: 18px; font-weight: 600; line-height: 34px; text-align: center; }
.wp-menu .collapse { color: #676b6e; font-size: 25px; letter-spacing: -.15px; }
.wp-content { position: relative; flex: 1; padding: 50px 40px 0 44px; background: #8b8c8d; color: #3b3d40; font-size: 25px; line-height: 40px; letter-spacing: -.08px; white-space: nowrap; }
.page::before {
  content: ""; position: absolute; inset: 0; z-index: 1;
  background: repeating-linear-gradient(45deg, rgba(0,0,0,.02) 0 1.400px, transparent 1.400px 4.243px), repeating-linear-gradient(-45deg, rgba(0,0,0,.02) 0 1.400px, transparent 1.400px 4.243px);
}
.screen-options { position: absolute; left: 1702px; top: 0; width: 300px; height: 57px; background: #919293; border: 2px solid #7d7e80; border-top: 0; }
.notice { background: #929394; border-left: 8px solid; box-shadow: 0 2px 2px rgba(0,0,0,.1); }
.warn { width: 675px; height: 82px; padding-left: 30px; line-height: 83px; border-color: #977521; font-size: 27px; letter-spacing: -.25px; }
.warn .ver { letter-spacing: .3px; }
h1 { margin: 38px 0 46px -1px; font-weight: 400; font-size: 44px; line-height: 60px; letter-spacing: 0; color: #2d2f33; }
.dropzone {
  height: 416px; display: flex; justify-content: center; align-items: flex-end; padding: 0 2px 88px 0;
  --h: repeating-linear-gradient(90deg, #707477 0 20px, transparent 20px 43.600px, #707477 43.600px 47.200px);
  --v: repeating-linear-gradient(180deg, #707477 0 19px, transparent 19px 41.200px, #707477 41.200px 44.500px);
  background: var(--h) 0 0 / 100% 8px no-repeat, var(--h) 0 100% / 100% 8px no-repeat, var(--v) 0 0 / 8px 100% no-repeat;
}
.select-btn { width: 175px; height: 56px; border: 2px solid #757678; border-bottom-width: 4px; border-radius: 6px; }
p { margin: 0; }
.p1 { padding-top: 26px; letter-spacing: -.05px; }
.p2 { padding-top: 25px; letter-spacing: -.22px; }
.error { height: 96px; margin-top: 25px; padding: 19px 0 0 28px; border-color: #8b3838; line-height: 38px; letter-spacing: -.25px; }
.broken { display: inline-block; overflow: hidden; width: 48px; height: 48px; padding: 7px 10px; border: 2px solid; border-color: #1c1f22 #6e7072 #6e7072 #1c1f22; vertical-align: baseline; }
.page .broken svg { fill: none; }
footer { margin-top: 184px; display: flex; justify-content: space-between; font-style: italic; font-size: 26px; letter-spacing: .2px; color: #47494c; }
footer b { width: 203px; font-size: 25px; letter-spacing: 0; font-style: normal; font-weight: 600; color: #1d5370; }

/* alert */
.dialog { position: absolute; z-index: 2; left: 814px; top: 300px; width: 585px; height: 352px; border: 2px solid #000; border-radius: 5px; background: #f7f7f7; overflow: hidden; display: flex; flex-direction: column; }
.message { height: 235px; line-height: 232px; text-align: center; font-family: Lato, sans-serif; font-size: 31px; color: #000; }
.actions { flex: 1; background: #e9e9e9; border-top: 2px solid #dcdcdc; padding: 26px 49px 0 0; display: flex; justify-content: flex-end; }
.actions button { width: 184px; height: 50px; padding: 6px; border: 2px solid #8f8f8f; border-radius: 6px; background: linear-gradient(#f1f1f1, #e8e8e8); box-shadow: inset 0 0 0 2px #fafafa, 0 2px 1px #d5d5d5; font: 29px "Noto Sans", sans-serif; color: #2b2b2b; }
.actions span { display: block; height: 34px; border: 2px dashed #b5b5b5; border-radius: 3px; line-height: 29px; padding-left: 4px; letter-spacing: .5px; }
```
